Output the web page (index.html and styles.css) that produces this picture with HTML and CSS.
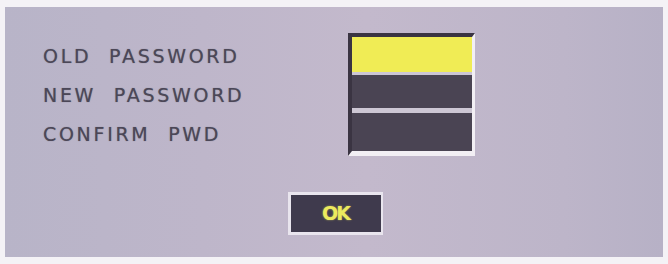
FILE: index.html
```html
<!DOCTYPE html>
<html>
<head>
<meta charset="utf-8">
<link rel="stylesheet" href="styles.css">
</head>
<body>
<div class="screen">
  <div class="form">
    <div class="labels">
      <div class="label">OLD PASSWORD</div>
      <div class="label">NEW PASSWORD</div>
      <div class="label">CONFIRM PWD</div>
    </div>
    <div class="box">
      <div class="field field-active"></div>
      <div class="field field-1"></div>
      <div class="field field-2"></div>
    </div>
  </div>
  <div class="actions">
    <div class="ok">OK</div>
  </div>
</div>
</body>
</html>
```
FILE: styles.css
```css
html, body {
  margin: 0;
  padding: 0;
  background: #f4f2f6;
}
body {
  width: 668px;
  height: 264px;
  overflow: hidden;
}
.screen {
  margin: 7px 5px 0 5px;
  height: 250px;
  background: linear-gradient(to right, #b8b4c8 0%, #beb6ca 30%, #c3b9cc 55%, #bdb5c9 85%, #b7b1c6 100%);
  font-family: "DejaVu Sans", sans-serif;
  box-sizing: border-box;
}
.form {
  display: flex;
  padding: 26px 0 0 38px;
}
.labels {
  width: 305px;
  padding-top: 4px;
}
.label {
  height: 39px;
  line-height: 39px;
  font-size: 19px;
  color: #4b4757;
  letter-spacing: 2.7px;
  word-spacing: 9px;
  white-space: nowrap;
  text-shadow: 0 0 1px rgba(75, 71, 87, 0.6);
}
.box {
  width: 127px;
  box-sizing: border-box;
  border-style: solid;
  border-width: 4px 3px 5px 4px;
  border-color: #3a3442 #f2eff4 #f2eff4 #3a3442;
  background: #cdc7d4;
  display: flex;
  flex-direction: column;
}
.field {
  background: #4a4453;
}
.field-active {
  height: 35px;
  background: #f0ec55;
  margin-bottom: 3px;
}
.field-1 {
  height: 33px;
  margin-bottom: 5px;
}
.field-2 {
  height: 38px;
}
.actions {
  display: flex;
  justify-content: center;
  padding-top: 36px;
  padding-left: 2px;
}
.ok {
  width: 95px;
  height: 43px;
  box-sizing: border-box;
  border: 3px solid #e9e5ee;
  border-right-width: 2px;
  background: #3f3a4d;
  color: #ecea5e;
  font-weight: bold;
  font-size: 19px;
  letter-spacing: -2px;
  text-align: center;
  line-height: 37px;
  text-shadow: 0 0 2px rgba(236, 234, 94, 0.6);
}
```
